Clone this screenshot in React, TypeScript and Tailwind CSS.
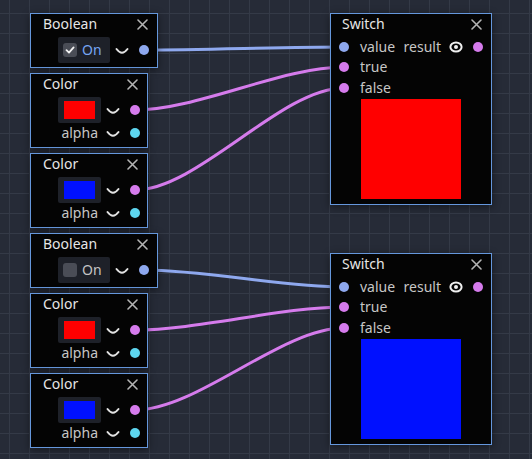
import React from 'react';

const BOOL = '#8ea8ee';
const VEC = '#d57bec';
const SCALAR = '#5dd5ee';

function Port({ color }: { color: string }) {
  return <span className="block h-[10px] w-[10px] shrink-0 rounded-full" style={{ backgroundColor: color }} />;
}

function CloseIcon() {
  return (
    <svg width="11" height="11" viewBox="0 0 11 11" className="shrink-0">
      <path d="M1 1 L10 10 M10 1 L1 10" stroke="#b4b4b4" strokeWidth="1.6" strokeLinecap="round" />
    </svg>
  );
}

function Chevron() {
  return (
    <svg width="14" height="9" viewBox="0 0 14 9" className="shrink-0">
      <path d="M1.5 2 Q7 9.5 12.5 2" stroke="#e2e2e2" strokeWidth="2" fill="none" strokeLinecap="round" />
    </svg>
  );
}

function EyeIcon() {
  return (
    <svg width="14" height="12" viewBox="0 0 14 12" className="shrink-0">
      <ellipse cx="7" cy="6" rx="5.6" ry="4.6" stroke="#f0f0f0" strokeWidth="2" fill="none" />
      <circle cx="7" cy="6" r="2" fill="#f0f0f0" />
    </svg>
  );
}

function Title({ text }: { text: string }) {
  return (
    <div className="flex h-[20px] items-center justify-between pl-[12px] pr-[9px]">
      <span className="text-[14px] leading-none text-[#e6e6e6]">{text}</span>
      <CloseIcon />
    </div>
  );
}

function BooleanNode({ on, top }: { on: boolean; top: number }) {
  return (
    <div
      className="absolute left-[30px] h-[55px] w-[128px] border border-[#6597dc] bg-[#040404] shadow-[0_2px_8px_rgba(0,0,0,0.45)]"
      style={{ top }}
    >
      <Title text="Boolean" />
      <div className="mt-[3px] flex h-[26px] items-center justify-end pr-[8px]">
        <div className="flex h-[26px] w-[52px] items-center gap-[5px] rounded-[2px] bg-[#1e2129] pl-[5px]">
          <span className="flex h-[14px] w-[14px] items-center justify-center rounded-[3px] bg-[#4a4d56]">
            {on && (
              <svg width="10" height="10" viewBox="0 0 10 10">
                <path d="M1.5 5.2 L4 7.6 L8.6 2.4" stroke="#f2f2f2" strokeWidth="1.8" fill="none" strokeLinecap="round" strokeLinejoin="round" />
              </svg>
            )}
          </span>
          <span className={`text-[14px] leading-none ${on ? 'text-[#76a5f2]' : 'text-[#c4c4c4]'}`}>On</span>
        </div>
        <span className="ml-[5px] mt-[3px]">
          <Chevron />
        </span>
        <span className="ml-[10px]">
          <Port color={BOOL} />
        </span>
      </div>
    </div>
  );
}

function ColorNode({ swatch, top }: { swatch: string; top: number }) {
  return (
    <div
      className="absolute left-[30px] h-[75px] w-[118px] border border-[#6597dc] bg-[#040404] shadow-[0_2px_8px_rgba(0,0,0,0.45)]"
      style={{ top }}
    >
      <Title text="Color" />
      <div className="mt-[3px] flex h-[26px] items-center justify-end pr-[7px]">
        <div className="flex h-[26px] w-[43px] items-center justify-center rounded-[2px] bg-[#1e2129]">
          <span className="block h-[18px] w-[31px]" style={{ backgroundColor: swatch }} />
        </div>
        <span className="ml-[5px] mt-[3px]">
          <Chevron />
        </span>
        <span className="ml-[10px]">
          <Port color={VEC} />
        </span>
      </div>
      <div className="flex h-[20px] items-center justify-end pr-[7px]">
        <span className="text-[14px] leading-none text-[#c6c6c6]">alpha</span>
        <span className="ml-[8px] mt-[3px]">
          <Chevron />
        </span>
        <span className="ml-[10px]">
          <Port color={SCALAR} />
        </span>
      </div>
    </div>
  );
}

function SwitchNode({ preview, top }: { preview: string; top: number }) {
  return (
    <div
      className="absolute left-[330px] h-[192px] w-[162px] border border-[#6597dc] bg-[#040404] shadow-[0_2px_8px_rgba(0,0,0,0.45)]"
      style={{ top }}
    >
      <div className="flex h-[20px] items-center justify-between pl-[11px] pr-[9px]">
        <span className="text-[14px] leading-none text-[#e6e6e6]">Switch</span>
        <CloseIcon />
      </div>
      <div className="mt-[3px] flex flex-col text-[14px] leading-none text-[#c6c6c6]">
        <div className="flex h-[20px] items-center pl-[8px] pr-[8px]">
          <Port color={BOOL} />
          <span className="ml-[11px]">value</span>
          <span className="ml-auto">result</span>
          <span className="ml-[8px]">
            <EyeIcon />
          </span>
          <span className="ml-[10px]">
            <Port color={VEC} />
          </span>
        </div>
        <div className="flex h-[20px] items-center pl-[8px]">
          <Port color={VEC} />
          <span className="ml-[11px]">true</span>
        </div>
        <div className="flex h-[21px] items-center pl-[8px]">
          <Port color={VEC} />
          <span className="ml-[11px]">false</span>
        </div>
      </div>
      <div className="ml-[30px] mt-[1px] h-[100px] w-[100px]" style={{ backgroundColor: preview }} />
    </div>
  );
}

const wires: { from: [number, number]; to: [number, number]; color: string }[] = [
  { from: [144, 50], to: [344, 47], color: BOOL },
  { from: [135, 110], to: [344, 67], color: VEC },
  { from: [135, 190], to: [344, 88], color: VEC },
  { from: [144, 270], to: [344, 287], color: BOOL },
  { from: [135, 330], to: [344, 307], color: VEC },
  { from: [135, 410], to: [344, 328], color: VEC },
];

function wirePath([x1, y1]: [number, number], [x2, y2]: [number, number]) {
  const cp = (x2 - x1) * 0.3;
  return `M${x1} ${y1} C${x1 + cp} ${y1} ${x2 - cp} ${y2} ${x2} ${y2}`;
}

export default function App() {
  return (
    <div className="relative h-[459px] w-[532px] overflow-hidden bg-[#262b37] font-['Noto_Sans',sans-serif] [background-image:linear-gradient(to_right,#343a47_1px,transparent_1px),linear-gradient(to_bottom,#343a47_1px,transparent_1px)] [background-position:9px_13px] [background-size:20px_20px]">
      {/* connections sit under the nodes */}
      <svg className="absolute inset-0" width="532" height="459">
        {wires.map((w, i) => (
          <path key={i} d={wirePath(w.from, w.to)} stroke={w.color} strokeWidth="3" fill="none" />
        ))}
      </svg>

      <BooleanNode on top={13} />
      <ColorNode swatch="#ff0000" top={73} />
      <ColorNode swatch="#0010ff" top={153} />
      <BooleanNode on={false} top={233} />
      <ColorNode swatch="#ff0000" top={293} />
      <ColorNode swatch="#0010ff" top={373} />

      <SwitchNode preview="#ff0000" top={13} />
      <SwitchNode preview="#0010ff" top={253} />
    </div>
  );
}
